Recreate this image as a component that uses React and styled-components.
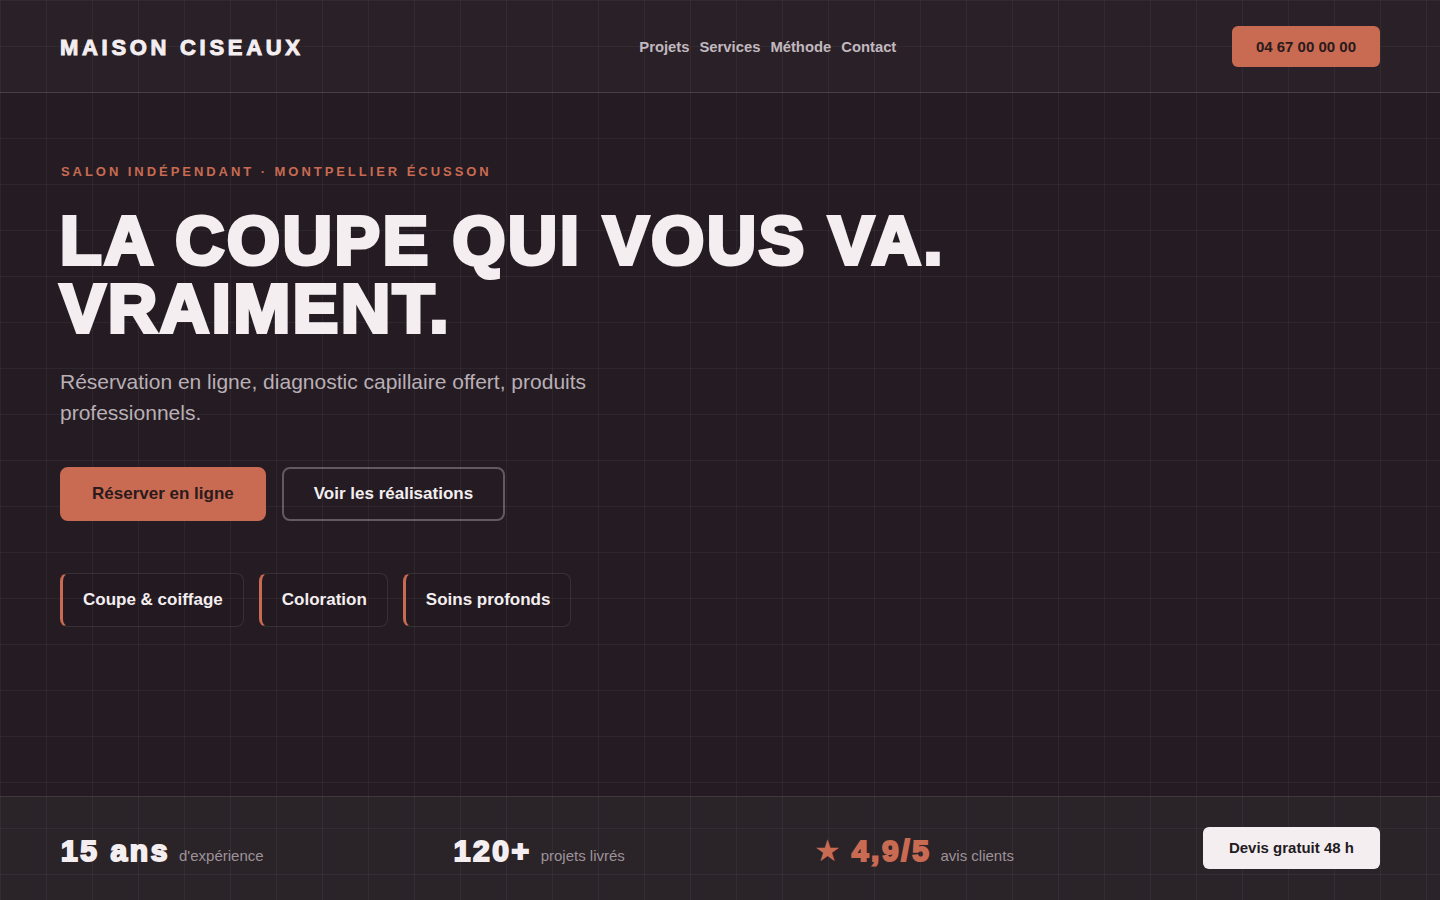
import styled, { createGlobalStyle } from "styled-components";

const GlobalStyle = createGlobalStyle`
  * {
    box-sizing: border-box;
  }
  body {
    margin: 0;
    background-color: #241c22;
    background-image:
      linear-gradient(to right, rgba(255, 255, 255, 0.045) 1px, transparent 1px),
      linear-gradient(to bottom, rgba(255, 255, 255, 0.045) 1px, transparent 1px);
    background-size: 46px 46px;
    font-family: "Liberation Sans", Arial, sans-serif;
    color: #f4eef1;
  }
`;

const accent = "#c96a52";

const Page = styled.div`
  min-height: 100vh;
  display: flex;
  flex-direction: column;
`;

const Header = styled.header`
  height: 93px;
  display: flex;
  align-items: center;
  justify-content: space-between;
  padding: 1px 60px 0;
  background: rgba(255, 255, 255, 0.025);
  border-bottom: 1px solid rgba(255, 255, 255, 0.1);
`;

const Logo = styled.div`
  font-size: 22px;
  font-weight: 700;
  letter-spacing: 3.7px;
  padding-top: 2px;
  -webkit-text-stroke: 1px #f4eef1;
  color: #f4eef1;
`;

const Nav = styled.nav`
  display: flex;
  gap: 10px;
`;

const NavLink = styled.a`
  font-size: 14.8px;
  font-weight: 700;
  color: #c2b8bf;
  text-decoration: none;
`;

const PhoneButton = styled.a`
  background: ${accent};
  color: #2a1a1c;
  font-size: 15px;
  font-weight: 700;
  line-height: 17px;
  padding: 12px 24px;
  border-radius: 6px;
  text-decoration: none;
`;

const Hero = styled.main`
  flex: 1;
  padding: 71px 60px 0;
`;

const Eyebrow = styled.div`
  color: ${accent};
  font-size: 13px;
  font-weight: 700;
  letter-spacing: 2.95px;
  line-height: 15px;
  margin-bottom: 27px;
  padding-left: 1px;
`;

const Title = styled.h1`
  margin: 0 0 24px;
  font-size: 68px;
  line-height: 68px;
  font-weight: 700;
  letter-spacing: 2.75px;
  color: #f4eef1;
  -webkit-text-stroke: 4px #f4eef1;
`;

const TitleLine = styled.span`
  display: block;
`;

const Lead = styled.p`
  margin: 0 0 39px;
  max-width: 560px;
  font-size: 21px;
  line-height: 31px;
  color: #b9afb6;
`;

const Actions = styled.div`
  display: flex;
  gap: 16px;
  margin-bottom: 52px;
`;

const Button = styled.a`
  display: inline-block;
  padding: 15px 30px;
  border-radius: 8px;
  font-size: 17px;
  font-weight: 700;
  line-height: 20px;
  text-decoration: none;
  border: 2px solid ${(p) => (p.$primary ? accent : "rgba(255, 255, 255, 0.28)")};
  background: ${(p) => (p.$primary ? accent : "transparent")};
  color: ${(p) => (p.$primary ? "#2a1a1c" : "#f4eef1")};
`;

const Chips = styled.div`
  display: flex;
  gap: 15px;
`;

const Chip = styled.div`
  padding: 16px 20px;
  border: 1px solid rgba(255, 255, 255, 0.09);
  border-left: 3px solid ${accent};
  border-radius: 8px;
  font-size: 17px;
  font-weight: 700;
  line-height: 20px;
  color: #f4eef1;
  background: rgba(0, 0, 0, 0.04);
`;

const StatsBar = styled.footer`
  height: 104px;
  display: flex;
  align-items: center;
  justify-content: space-between;
  padding: 4px 60px 0;
  background: rgba(255, 255, 255, 0.03);
  border-top: 1px solid rgba(255, 255, 255, 0.1);
`;

const Stat = styled.div`
  display: flex;
  align-items: baseline;
  gap: 9px;
`;

const StatValue = styled.span`
  font-size: 30px;
  font-weight: 700;
  letter-spacing: 2.6px;
  padding-left: 1px;
  color: ${(p) => (p.$accent ? accent : "#f4eef1")};
  -webkit-text-stroke: 2px ${(p) => (p.$accent ? accent : "#f4eef1")};
`;

const Star = styled.span`
  font-family: "DejaVu Sans", sans-serif;
  font-size: 30px;
  color: ${accent};
  margin-right: 1px;
`;

const StatLabel = styled.span`
  font-size: 15px;
  color: #9d9299;
`;

const QuoteButton = styled.a`
  align-self: center;
  margin-top: -5px;
  background: #f4eef1;
  color: #231b21;
  font-size: 15px;
  font-weight: 700;
  line-height: 18px;
  padding: 12px 26px;
  border-radius: 6px;
  text-decoration: none;
`;

export default function App() {
  return (
    <>
      <GlobalStyle />
      <Page>
        <Header>
          <Logo>MAISON CISEAUX</Logo>
          <Nav>
            <NavLink href="#">Projets</NavLink>
            <NavLink href="#">Services</NavLink>
            <NavLink href="#">Méthode</NavLink>
            <NavLink href="#">Contact</NavLink>
          </Nav>
          <PhoneButton href="#">04 67 00 00 00</PhoneButton>
        </Header>

        <Hero>
          <Eyebrow>SALON INDÉPENDANT · MONTPELLIER ÉCUSSON</Eyebrow>
          <Title>
            <TitleLine>LA COUPE QUI VOUS VA.</TitleLine>
            <TitleLine>VRAIMENT.</TitleLine>
          </Title>
          <Lead>
            Réservation en ligne, diagnostic capillaire offert, produits
            professionnels.
          </Lead>
          <Actions>
            <Button href="#" $primary>
              Réserver en ligne
            </Button>
            <Button href="#">Voir les réalisations</Button>
          </Actions>
          <Chips>
            <Chip>Coupe &amp; coiffage</Chip>
            <Chip>Coloration</Chip>
            <Chip>Soins profonds</Chip>
          </Chips>
        </Hero>

        <StatsBar>
          <Stat>
            <StatValue>15 ans</StatValue>
            <StatLabel>d'expérience</StatLabel>
          </Stat>
          <Stat>
            <StatValue>120+</StatValue>
            <StatLabel>projets livrés</StatLabel>
          </Stat>
          <Stat>
            <Star>★</Star>
            <StatValue $accent>4,9/5</StatValue>
            <StatLabel>avis clients</StatLabel>
          </Stat>
          <QuoteButton href="#">Devis gratuit 48 h</QuoteButton>
        </StatsBar>
      </Page>
    </>
  );
}
